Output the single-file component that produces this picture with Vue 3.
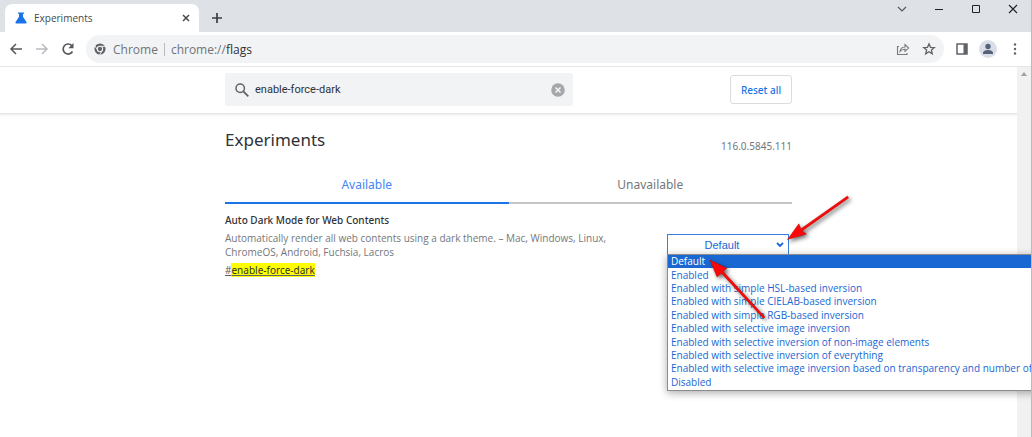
<script setup>
import { ref } from 'vue'

const query = ref('enable-force-dark')
const choice = ref('Default')
const options = [
  'Default',
  'Enabled',
  'Enabled with simple HSL-based inversion',
  'Enabled with simple CIELAB-based inversion',
  'Enabled with simple RGB-based inversion',
  'Enabled with selective image inversion',
  'Enabled with selective inversion of non-image elements',
  'Enabled with selective inversion of everything',
  'Enabled with selective image inversion based on transparency and number of',
  'Disabled',
]
</script>

<template>
  <div class="window">
    <header class="tabstrip">
      <div class="tab">
        <svg class="flask" viewBox="0 0 12 12" width="12" height="12" aria-hidden="true">
          <path d="M3 0.5h6v1.3H8v3l3.4 5.2q0.8 1.6-1 1.6H1.600q-1.800 0-1-1.600L4 4.800v-3H3z" fill="#1a73e8" />
        </svg>
        <span class="tab-title">Experiments</span>
        <button class="icon" aria-label="Close tab">
          <svg viewBox="0 0 8 8" width="8" height="8"><path d="M1 1l6 6M7 1L1 7" stroke="#45494d" stroke-width="1.500" /></svg>
        </button>
      </div>
      <button class="icon new-tab" aria-label="New tab">
        <svg viewBox="0 0 12 12" width="12" height="12"><path d="M6 1v10M1 6h10" stroke="#3c4043" stroke-width="1.700" /></svg>
      </button>
      <div class="window-controls">
        <button class="icon" aria-label="Search tabs">
          <svg viewBox="0 0 10 10" width="10" height="10"><path d="M1 3l4 4 4-4" fill="none" stroke="#55585c" stroke-width="1.200" /></svg>
        </button>
        <button class="icon" aria-label="Minimize">
          <svg viewBox="0 0 10 10" width="10" height="10"><path d="M1 5.500h8" stroke="#222" /></svg>
        </button>
        <button class="icon" aria-label="Maximize">
          <svg viewBox="0 0 10 10" width="10" height="10"><path d="M1.500 1.500h7v7h-7z" fill="none" stroke="#222" /></svg>
        </button>
        <button class="icon" aria-label="Close">
          <svg viewBox="0 0 10 10" width="10" height="10"><path d="M1 1l8 8M9 1L1 9" stroke="#222" stroke-width="1.100" /></svg>
        </button>
      </div>
    </header>

    <nav class="toolbar">
      <div class="nav-buttons">
        <button class="icon" aria-label="Back">
          <svg viewBox="0 0 14 14" width="14" height="14"><path d="M13 7H2M7 2L2 7l5 5" fill="none" stroke="#55585c" stroke-width="1.500" /></svg>
        </button>
        <button class="icon" aria-label="Forward">
          <svg viewBox="0 0 14 14" width="14" height="14"><path d="M1 7h11M7 2l5 5-5 5" fill="none" stroke="#b9bbbe" stroke-width="1.500" /></svg>
        </button>
        <button class="icon" aria-label="Reload">
          <svg viewBox="0 0 14 14" width="14" height="14">
            <path d="M11.500 9.500A5 5 0 1 1 10.800 3.600" fill="none" stroke="#55585c" stroke-width="1.700" />
            <path d="M12.500 1v5.200H7.300z" fill="#55585c" />
          </svg>
        </button>
      </div>
      <div class="omnibox">
        <svg viewBox="0 0 14 14" width="12" height="12" aria-hidden="true">
          <circle cx="7" cy="7" r="6.500" fill="#5f6368" />
          <circle cx="7" cy="7" r="3.100" fill="#5f6368" stroke="#f1f3f4" stroke-width="1.200" />
          <path d="M7 3.900h5.800M4.300 8.500L1.400 3.600M9.700 8.500l-2.900 4.900" stroke="#f1f3f4" stroke-width="1.100" />
        </svg>
        <span class="scheme">Chrome</span>
        <span class="divider"></span>
        <span class="url">chrome://<b>flags</b></span>
        <button class="icon share" aria-label="Share">
          <svg viewBox="0 0 14 14" width="14" height="14">
            <path d="M3 4.500H1.500v8h9.500V11" fill="none" stroke="#777b80" stroke-width="1.100" />
            <path d="M4 9.500q.5-4.300 5-4.500V2.500L12.600 6 9 9.300V7.200Q6 7 4 9.500z" fill="none" stroke="#777b80" stroke-width="1.100" />
          </svg>
        </button>
        <button class="icon" aria-label="Bookmark">
          <svg viewBox="0 0 14 14" width="14" height="14"><path d="M7 1.800l1.500 3.500 3.800.3-2.900 2.500.9 3.700L7 9.800l-3.300 2 .9-3.700-2.900-2.500 3.800-.3z" fill="none" stroke="#5f6368" stroke-width="1.300" /></svg>
        </button>
      </div>
      <div class="toolbar-end">
        <button class="icon" aria-label="Side panel">
          <svg viewBox="0 0 12 12" width="12" height="12">
            <path d="M1 1h10v10H1z" fill="none" stroke="#5f6368" stroke-width="1.500" />
            <path d="M7.500 1H11v10H7.500z" fill="#5f6368" />
          </svg>
        </button>
        <button class="icon avatar" aria-label="Profile">
          <svg viewBox="0 0 12 12" width="12" height="12" fill="#56627a"><circle cx="6" cy="3.500" r="2.700" /><path d="M1 11V9.500Q1.500 7 6 7T11 9.500V11z" /></svg>
        </button>
        <button class="icon" aria-label="Menu">
          <svg viewBox="0 0 4 12" width="4" height="12" fill="#5f6368"><circle cx="2" cy="1.500" r="1.200" /><circle cx="2" cy="6" r="1.200" /><circle cx="2" cy="10.500" r="1.200" /></svg>
        </button>
      </div>
    </nav>

    <div class="viewport">
      <main class="page">
        <div class="search-bar">
          <div class="column search-row">
            <label class="search">
              <svg viewBox="0 0 14 14" width="14" height="14" aria-hidden="true">
                <circle cx="5.200" cy="5.200" r="4.200" fill="none" stroke="#5f6368" stroke-width="1.500" />
                <path d="M8.300 8.300l5 5" stroke="#5f6368" stroke-width="1.800" />
              </svg>
              <input v-model="query" type="text" aria-label="Search flags" />
              <button class="icon" aria-label="Clear search">
                <svg viewBox="0 0 14 14" width="14" height="14"><circle cx="7" cy="7" r="6.800" fill="#a5a8ab" /><path d="M4.500 4.500l5 5M9.500 4.500l-5 5" stroke="#f1f3f4" stroke-width="1.600" /></svg>
              </button>
            </label>
            <button class="reset">Reset all</button>
          </div>
        </div>

        <div class="column">
          <div class="heading">
            <h1>Experiments</h1>
            <span class="version">116.0.5845.111</span>
          </div>
          <div class="tabs" role="tablist">
            <button class="selected" role="tab" aria-selected="true">Available</button>
            <button role="tab" aria-selected="false">Unavailable</button>
          </div>
          <section class="flag">
            <div class="flag-text">
              <h2>Auto Dark Mode for Web Contents</h2>
              <p>Automatically render all web contents using a dark theme. – Mac, Windows, Linux, ChromeOS, Android, Fuchsia, Lacros</p>
              <a href="#enable-force-dark">#<mark>enable-force-dark</mark></a>
            </div>
            <div class="picker">
              <select v-model="choice" aria-label="Auto Dark Mode for Web Contents">
                <option v-for="o in options" :key="o">{{ o }}</option>
              </select>
              <svg class="chevron" viewBox="0 0 8 6" width="8" height="6" aria-hidden="true"><path d="M1 1l3 3 3-3" fill="none" stroke="#1967d2" stroke-width="1.800" /></svg>
              <ul class="menu" role="listbox" aria-label="Options">
                <li v-for="o in options" :key="o" role="option" :aria-selected="o === choice" :class="{ active: o === choice }">{{ o }}</li>
              </ul>
              <svg class="arrows" viewBox="0 0 190 135" width="190" height="135" aria-hidden="true">
                <g fill="#f80808" stroke="#b00" stroke-width="0.400">
                  <path d="M120.500 44.500L131.800 28.800l2.200 4.900L180.400 1l1.300 1.900-46.500 33 4.300 3.200z" />
                  <path d="M43 65l17 8.300-3.800 3.200L98 122l-1.600 1.500L54.400 78.200 50 82z" />
                </g>
              </svg>
            </div>
          </section>
        </div>
      </main>
      <div class="scrollbar">
        <svg viewBox="0 0 6 4" width="6" height="4" aria-hidden="true"><path d="M0 4l3-4 3 4z" fill="#a0a0a0" /></svg>
      </div>
    </div>
  </div>
</template>

<style>
body {
  margin: 0;
  overflow: hidden;
}
</style>

<style scoped>
* {
  box-sizing: border-box;
}
.window {
  display: flex;
  flex-direction: column;
  height: 100vh;
  overflow: hidden;
  border-right: 1px solid #bbb;
  background: #fff;
  color: #303236;
  font-family: "Noto Sans", "Open Sans", sans-serif;
  font-size: 10px;
}
button {
  font: inherit;
  color: inherit;
  padding: 0;
  border: 0;
  background: none;
}
.icon {
  display: flex;
  align-items: center;
  justify-content: center;
}
svg {
  display: block;
  flex: none;
}
.tabstrip {
  display: flex;
  height: 32px;
  padding: 4px 13px 0 5px;
  background: #dee1e6;
}
.tab {
  display: flex;
  align-items: center;
  width: 194px;
  padding: 0 9px 0 10px;
  border-radius: 7px 7px 0 0;
  background: #fff;
}
.tab-title {
  flex: 1;
  margin-left: 7px;
  font-family: "Open Sans", sans-serif;
  color: #45494d;
}
.new-tab {
  margin-left: 12px;
}
.window-controls {
  display: flex;
  gap: 27px;
  height: 10px;
  margin-left: auto;
}
.toolbar {
  display: flex;
  align-items: center;
  height: 35px;
  padding: 0 14px 0 9px;
  border-bottom: 1px solid #e4e5e7;
}
.nav-buttons {
  display: flex;
  gap: 12px;
  margin-right: 11px;
}
.omnibox {
  display: flex;
  flex: 1;
  align-items: center;
  height: 28px;
  padding: 0 8px;
  border-radius: 14px;
  background: #f1f3f4;
  font-family: "Open Sans", sans-serif;
  font-size: 12px;
  color: #707478;
}
.scheme {
  margin-left: 7px;
}
.divider {
  width: 1px;
  height: 13px;
  margin: 0 6px;
  background: #b9bbbe;
}
.url b {
  color: #303236;
  font-weight: 400;
}
.share {
  margin: 0 12px 0 auto;
}
.toolbar-end {
  display: flex;
  align-items: center;
  gap: 11px;
  margin-left: 12px;
}
.avatar {
  width: 18px;
  height: 18px;
  border-radius: 50%;
  background: #dadfe7;
}
.toolbar-end .icon:last-child {
  margin-left: 5px;
}
.viewport {
  display: flex;
  flex: 1;
}
.page {
  flex: 1;
}
.scrollbar {
  display: flex;
  justify-content: center;
  width: 14px;
  padding-top: 5px;
  background: #f1f1f1;
}
.column {
  width: 100%;
  max-width: 567px;
  margin: 0 auto;
}
.search-bar {
  padding: 6px 0 7px;
  border-bottom: 1px solid #e6e6e6;
  box-shadow: 0 1px 2px #e9e9e9;
}
.search-row {
  display: flex;
  align-items: center;
  justify-content: space-between;
}
.search {
  display: flex;
  align-items: center;
  width: 348px;
  height: 33px;
  padding: 0 8px 0 10px;
  border-radius: 3px;
  background: #f1f3f4;
}
.search input {
  flex: 1;
  min-width: 0;
  margin: 0 0 0 6px;
  padding: 0;
  border: 0;
  outline: 0;
  background: none;
  font: 11px Roboto, sans-serif;
  color: #303236;
}
.reset {
  width: 62px;
  height: 29px;
  border: 1px solid #dadce0;
  border-radius: 3px;
  font-weight: 500;
  color: #1a73e8;
}
.heading {
  display: flex;
  align-items: flex-end;
  justify-content: space-between;
  padding-top: 13px;
}
h1 {
  margin: 0;
  font-size: 17px;
  line-height: 26px;
  font-weight: 400;
}
.version {
  line-height: 14px;
  color: #74777b;
}
.tabs {
  display: grid;
  grid-template-columns: 1fr 1fr;
  margin-top: 14px;
}
.tabs button {
  height: 37px;
  border-bottom: 2px solid #c4c5c7;
  font-size: 12px;
  color: #74777b;
}
.tabs .selected {
  border-color: #1a73e8;
  color: #4285f4;
}
.flag {
  display: flex;
  align-items: flex-start;
  justify-content: space-between;
  padding-top: 8px;
}
.flag-text {
  width: 400px;
}
h2 {
  margin: 0 0 3px;
  font-size: 10px;
  line-height: 16px;
  font-weight: 500;
}
p {
  margin: 0 0 3px;
  font-family: "Open Sans", sans-serif;
  line-height: 14px;
  color: #74777b;
}
.flag-text a {
  display: block;
  line-height: 16px;
  color: #5f6368;
}
mark {
  background: #ff0;
  color: #303236;
}
.picker {
  position: relative;
  width: 122px;
  margin-top: 22px;
  margin-right: 3px;
}
select {
  display: block;
  width: 100%;
  height: 21px;
  padding: 0 12px 0 0;
  border: 1px solid #3c7edb;
  border-radius: 0;
  outline: 0;
  appearance: none;
  background: #fff;
  font: 11px "Liberation Sans", Arial, sans-serif;
  text-align: center;
  text-align-last: center;
  color: #1967d2;
}
.chevron {
  position: absolute;
  top: 8px;
  right: 5px;
}
.menu {
  position: absolute;
  top: 20px;
  left: 0;
  display: grid;
  grid-auto-rows: 1fr;
  min-width: 400px;
  height: 137px;
  margin: 0;
  padding: 0 0 1px;
  border: 1px solid #8c8c8c;
  box-shadow: 0 2px 8px #0005;
  background: #fff;
  list-style: none;
  font-family: "Open Sans", sans-serif;
  font-size: 10px;
  line-height: 13px;
  color: #1967d2;
}
.menu li {
  display: flex;
  align-items: center;
  padding: 0 3px;
  white-space: nowrap;
}
.menu .active {
  background: #1967d2;
  color: #fff;
}
.arrows {
  position: absolute;
  top: -39px;
  left: 0;
  filter: drop-shadow(2px 2px 2px #0009);
  pointer-events: none;
}
</style>
